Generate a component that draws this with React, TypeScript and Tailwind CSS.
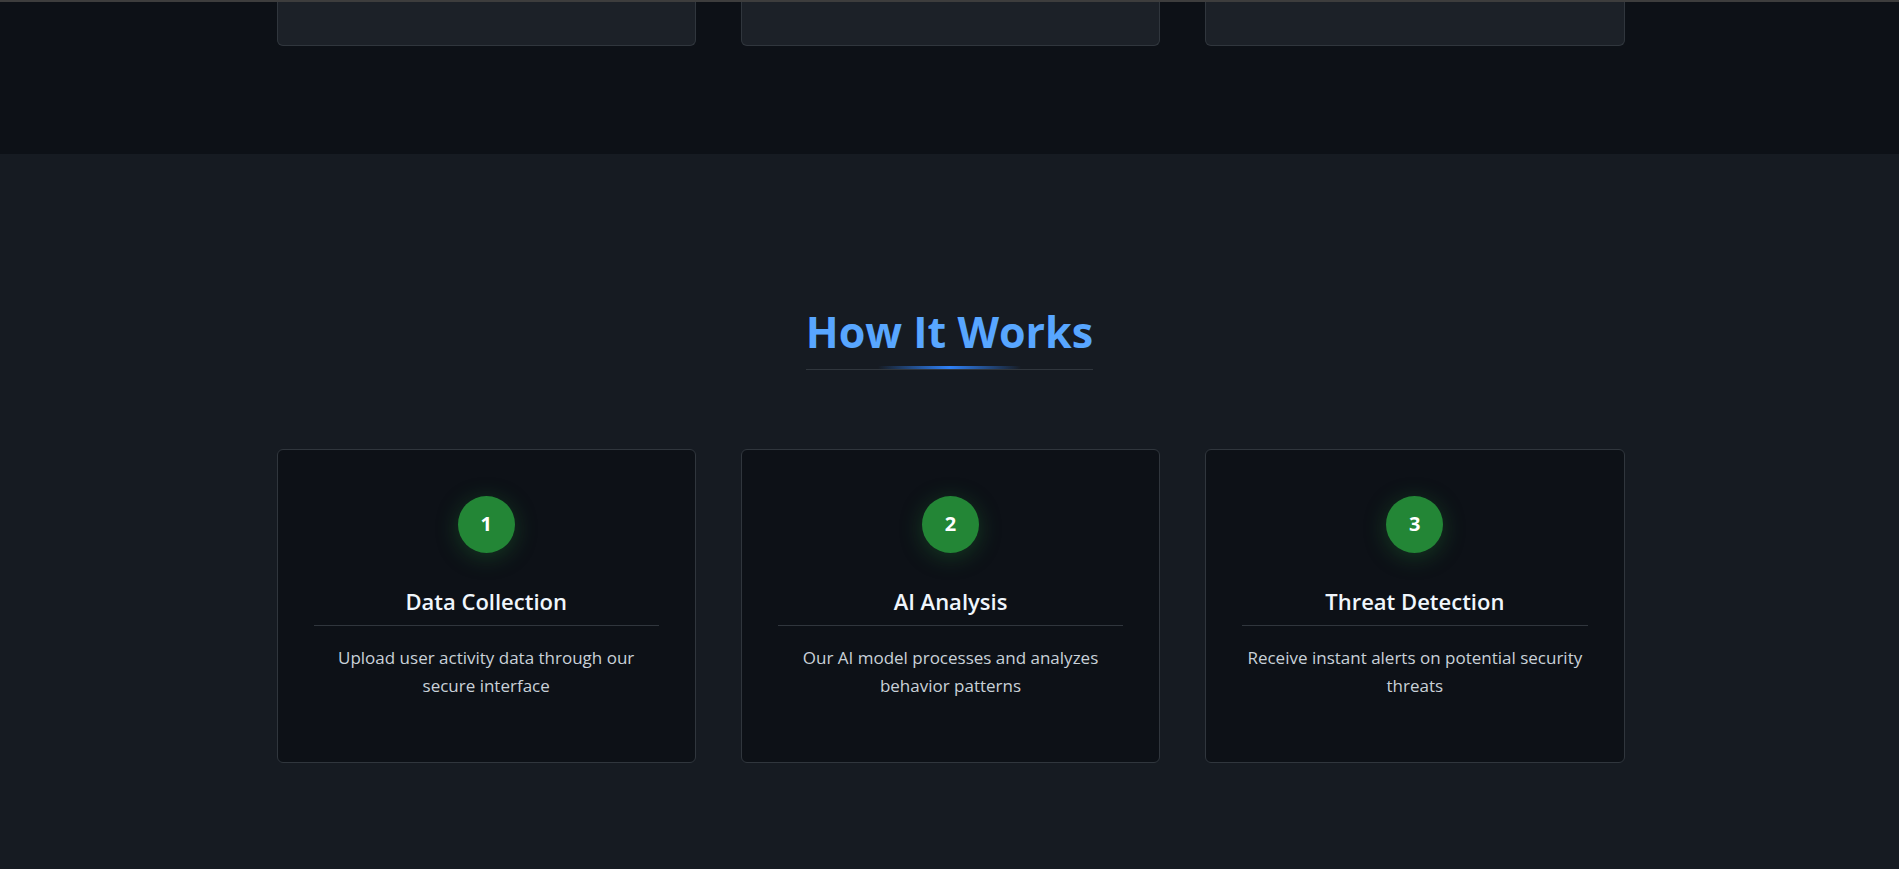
import React from "react";

const steps = [
  {
    n: 1,
    title: "Data Collection",
    text: "Upload user activity data through our secure interface",
  },
  {
    n: 2,
    title: "AI Analysis",
    text: "Our AI model processes and analyzes behavior patterns",
  },
  {
    n: 3,
    title: "Threat Detection",
    text: "Receive instant alerts on potential security threats",
  },
];

const StepCard: React.FC<{ n: number; title: string; text: string }> = ({ n, title, text }) => (
  <div className="h-[314px] rounded-md border border-[#30363d] bg-[#0d1117] px-9 pt-[46px] text-center">
    <div className="mx-auto flex h-[57px] w-[57px] items-center justify-center rounded-full bg-[#238636] text-[20px] font-bold text-white shadow-[0_4px_22px_rgba(35,134,54,0.35)]">
      {n}
    </div>
    <h3 className="mt-[32px] border-b border-[#30363d] pb-2 text-[22px] leading-[32px] font-semibold text-[#f0f6fc]">
      {title}
    </h3>
    <p className="mt-[18px] px-1 text-[17px] leading-[28px] text-[#c9d1d9]">{text}</p>
  </div>
);

export default function App() {
  return (
    <div className="min-h-screen bg-[#161b22] font-['Open_Sans',sans-serif]">
      <div className="h-[2px] bg-[#3d3d3d]" />
      <section className="bg-[#0d1117] pb-[108px]">
        <div className="mx-auto grid w-[1348px] translate-x-[1px] grid-cols-3 gap-[45px]">
          <div className="h-[44px] rounded-b-md border-x border-b border-[#30363d] bg-[#1c2128]" />
          <div className="h-[44px] rounded-b-md border-x border-b border-[#30363d] bg-[#1c2128]" />
          <div className="h-[44px] rounded-b-md border-x border-b border-[#30363d] bg-[#1c2128]" />
        </div>
      </section>
      <section className="pt-[151px] pb-[120px]">
        <div className="text-center">
          <h2 className="relative inline-block border-b border-[#30363d] pb-[10px] text-[43px] leading-[1.25] font-bold text-[#58a6ff]">
            How It Works
            <span className="absolute bottom-0 left-1/4 h-[3px] w-1/2 bg-gradient-to-r from-transparent via-[#2f81f7] to-transparent" />
          </h2>
        </div>
        <div className="mx-auto mt-[79px] grid w-[1348px] translate-x-[1px] grid-cols-3 gap-[45px]">
          {steps.map((s) => (
            <StepCard key={s.n} {...s} />
          ))}
        </div>
      </section>
    </div>
  );
}
